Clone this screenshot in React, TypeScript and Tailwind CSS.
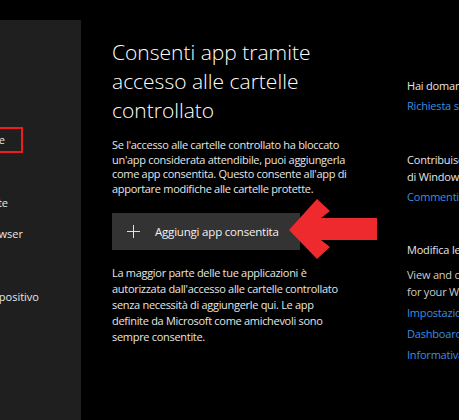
const navItems = [
  { label: "Protezione da virus e minacce", clip: "w-[5px]", selected: true },
  { label: "Protezione account", clip: "w-0" },
  { label: "Firewall e protezione della rete", clip: "w-[8px]" },
  { label: "Controllo app e browser", clip: "w-[23px]" },
  { label: "Sicurezza dispositivi", clip: "w-0" },
  { label: "Prestazioni e integrità del dispositivo", clip: "w-[39px]" },
];

const introLines = [
  "Se l'accesso alle cartelle controllato ha bloccato",
  "un'app considerata attendibile, puoi aggiungerla",
  "come app consentita. Questo consente all'app di",
  "apportare modifiche alle cartelle protette.",
];

const noteLines = [
  "La maggior parte delle tue applicazioni è",
  "autorizzata dall'accesso alle cartelle controllato",
  "senza necessità di aggiungerle qui. Le app",
  "definite da Microsoft come amichevoli sono",
  "sempre consentite.",
];

function Sidebar() {
  return (
    <aside className="mt-5 w-[81px] shrink-0 bg-[#1f1f1f]">
      <div className="flex flex-col pt-[104px]">
        {navItems.map((item) => (
          <div key={item.label} className="relative flex h-[31.5px] items-center">
            <div className={`flex ${item.clip} justify-end overflow-hidden`}>
              <span className="whitespace-nowrap text-[11px] text-[#e8e8e8]">{item.label}</span>
            </div>
            {item.selected && (
              <div className="absolute left-[-4px] top-[3px] h-[26px] w-[27px] border-2 border-[#f21a1a]" />
            )}
          </div>
        ))}
      </div>
    </aside>
  );
}

function PlusIcon() {
  return (
    <svg width="13" height="13" viewBox="0 0 13 13" className="shrink-0">
      <path d="M6.5 0v13M0 6.5h13" stroke="#e0e0e0" strokeWidth="1" />
    </svg>
  );
}

function RedArrow() {
  return (
    <svg
      className="pointer-events-none absolute left-0 top-0"
      width="459"
      height="420"
      viewBox="0 0 459 420"
    >
      <polygon
        points="289,230 317,199 330,211 321,218 377,218 377,240 321,240 330,247 317,259"
        fill="#ee2a2e"
      />
    </svg>
  );
}

export default function App() {
  return (
    <div
      className="relative flex h-[420px] w-[459px] overflow-hidden bg-black text-white"
      style={{ fontFamily: '"Open Sans", "Noto Sans", sans-serif' }}
    >
      <Sidebar />

      {/* main content */}
      <main className="ml-[31px] w-[250px] shrink-0 pt-[38px]">
        <h1 className="text-[21px] font-light leading-[29px] text-white">
          Consenti app tramite accesso alle cartelle controllato
        </h1>
        <p className="mt-[13px] whitespace-nowrap text-[11px] leading-[14.5px] tracking-[-0.3px] text-[#e6e6e6]">
          {introLines.map((line) => (
            <span key={line} className="block">
              {line}
            </span>
          ))}
        </p>
        <button className="mt-[17px] flex h-[37px] w-[188px] items-center gap-[15px] bg-[#333333] pl-[15px] text-[11.5px] tracking-[-0.2px] text-[#f2f2f2]">
          <PlusIcon />
          <span>Aggiungi app consentita</span>
        </button>
        <p className="mt-[15px] whitespace-nowrap text-[11px] leading-[16px] tracking-[-0.3px] text-[#e6e6e6]">
          {noteLines.map((line) => (
            <span key={line} className="block">
              {line}
            </span>
          ))}
        </p>
      </main>

      {/* right column */}
      <aside className="ml-[45px] shrink-0 whitespace-nowrap pt-[77px] text-[11px] leading-[17px] tracking-[-0.2px]">
        <div className="text-[#e6e6e6]">Hai domande?</div>
        <div className="mt-[3px] text-[#3a8fe0]">Richiesta supporto</div>

        <div className="mt-[37px] text-[#e6e6e6]">Contribuisci a migliorare Sicurezza</div>
        <div className="text-[#e6e6e6]">di Windows</div>
        <div className="mt-[3px] text-[#3a8fe0]">Commenti</div>

        <div className="mt-[36px] text-[#e6e6e6]">Modifica le impostazioni di privacy</div>
        <div className="mt-[8px] text-[#cccccc]">View and change privacy settings</div>
        <div className="text-[#cccccc]">for your Windows 10 device.</div>
        <div className="mt-[4px] text-[#3a8fe0]">Impostazioni di privacy</div>
        <div className="mt-[4px] text-[#3a8fe0]">Dashboard sulla privacy</div>
        <div className="mt-[4px] text-[#3a8fe0]">Informativa sulla privacy</div>
      </aside>

      <RedArrow />
    </div>
  );
}
